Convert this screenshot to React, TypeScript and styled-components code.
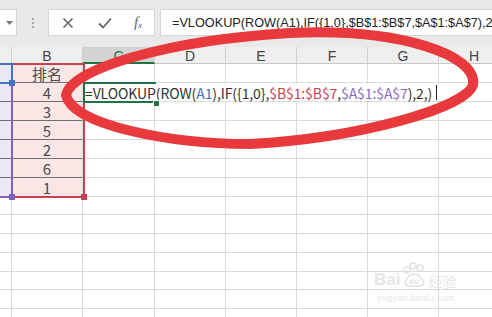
import React from "react";
import styled, { createGlobalStyle } from "styled-components";

const GlobalStyle = createGlobalStyle`
  html, body { margin: 0; padding: 0; background: #fff; overflow: hidden; }
  #root { width: 492px; height: 317px; }
`;

const COLS = [12, 71, 72, 71, 71, 71, 71, 71];
const LETTERS = ["", "B", "C", "D", "E", "F", "G", "H"];
const ROW_H = [19, 19, 19, 19, 19, 19, 19, 18, 19, 19, 19, 18, 19, 19];
const B_VALUES = ["排名", "4", "3", "5", "2", "6", "1"];

const Page = styled.div`
  position: relative;
  width: 492px;
  height: 317px;
  overflow: hidden;
  background: #fff;
  font-family: "Noto Sans CJK SC", "Liberation Sans", sans-serif;
`;

const Toolbar = styled.div`
  display: flex;
  align-items: flex-start;
  height: 47px;
  box-sizing: border-box;
  padding-top: 9px;
  background: #e9e9e9;
`;

const NameBox = styled.div`
  width: 17px;
  height: 27px;
  box-sizing: border-box;
  background: #fff;
  border: 1px solid #d6d6d6;
  border-left: none;
  display: flex;
  align-items: center;
  justify-content: flex-end;
  padding-right: 3px;
`;

const Dots = styled.div`
  width: 31px;
  height: 27px;
  display: flex;
  flex-direction: column;
  align-items: center;
  justify-content: center;
  gap: 2px;
  span {
    width: 2px;
    height: 2px;
    background: #a8a8a8;
  }
`;

const ButtonGroup = styled.div`
  width: 107px;
  height: 27px;
  box-sizing: border-box;
  background: #fff;
  border: 1px solid #d6d6d6;
  display: flex;
  align-items: center;
`;

const ToolButton = styled.div<{ $w: number }>`
  width: ${(p) => p.$w}px;
  height: 25px;
  display: flex;
  align-items: center;
  justify-content: center;
  color: #666;
`;

const Fx = styled.span`
  font-family: "Liberation Serif", serif;
  font-style: italic;
  font-size: 15px;
  color: #666;
  sub {
    font-size: 9px;
    vertical-align: -1px;
  }
`;

const FormulaInput = styled.div`
  flex: 1;
  margin-left: 5px;
  height: 27px;
  box-sizing: border-box;
  background: #fff;
  border: 1px solid #d6d6d6;
  border-right: none;
  padding-left: 11px;
  display: flex;
  align-items: center;
  white-space: nowrap;
  overflow: hidden;
  font-family: "Liberation Sans", sans-serif;
  font-size: 12.7px;
  color: #222;
`;

const Grid = styled.div`
  display: flex;
  flex-direction: column;
`;

const Row = styled.div<{ $h: number }>`
  display: flex;
  height: ${(p) => p.$h}px;
`;

const HeaderCell = styled.div<{ $w: number; $sel?: boolean }>`
  flex: 0 0 ${(p) => p.$w}px;
  box-sizing: border-box;
  height: 100%;
  background: ${(p) => (p.$sel ? "#d3d3d3" : "#efefef")};
  border-right: 1px solid #cfcfcf;
  border-bottom: ${(p) => (p.$sel ? "2px solid #217346" : "1px solid #c8c8c8")};
  display: flex;
  align-items: center;
  justify-content: center;
  font-family: "Liberation Sans", sans-serif;
  font-size: 14px;
  color: ${(p) => (p.$sel ? "#217346" : "#444")};
  padding-top: 2px;
`;

const Cell = styled.div<{ $w: number; $bg?: string; $bottom?: string }>`
  flex: 0 0 ${(p) => p.$w}px;
  box-sizing: border-box;
  height: 100%;
  background: ${(p) => p.$bg || "#fff"};
  border-right: 1px solid #dadada;
  border-bottom: 1px solid ${(p) => p.$bottom || "#dadada"};
  display: flex;
  align-items: center;
  justify-content: center;
  font-size: 15px;
  color: #4a4a4a;
  line-height: 1;
`;

const RangeBox = styled.div<{ $c: string; $x: number; $y: number; $w: number; $h: number }>`
  position: absolute;
  left: ${(p) => p.$x}px;
  top: ${(p) => p.$y}px;
  width: ${(p) => p.$w}px;
  height: ${(p) => p.$h}px;
  box-sizing: border-box;
  border: 2px solid ${(p) => p.$c};
  pointer-events: none;
`;

const Handle = styled.div<{ $c: string; $x: number; $y: number }>`
  position: absolute;
  left: ${(p) => p.$x - 3}px;
  top: ${(p) => p.$y - 3}px;
  width: 6px;
  height: 6px;
  background: ${(p) => p.$c};
`;

const ActiveCell = styled.div`
  position: absolute;
  left: 83px;
  top: 82px;
  width: 73px;
  height: 21px;
  box-sizing: border-box;
  border: 2px solid #217346;
  border-right: none;
`;

const FillHandle = styled.div`
  position: absolute;
  left: 153px;
  top: 100px;
  width: 5px;
  height: 5px;
  background: #217346;
  border: 1px solid #fff;
`;

const EditText = styled.div`
  position: absolute;
  left: 85px;
  top: 84px;
  height: 17px;
  display: flex;
  align-items: center;
  white-space: nowrap;
  background: #fff;
  padding-right: 2px;
  font-family: "Noto Sans CJK SC", "Liberation Sans", sans-serif;
  font-size: 14px;
  letter-spacing: -0.1px;
  color: #333;
`;

const Ref = styled.span<{ $c: string }>`
  color: ${(p) => p.$c};
`;

const Caret = styled.span`
  display: inline-block;
  width: 1px;
  height: 15px;
  margin-left: 4px;
  background: #222;
`;

const Overlay = styled.svg`
  position: absolute;
  left: 0;
  top: 0;
  pointer-events: none;
`;

const Watermark = styled.div`
  position: absolute;
  left: 374px;
  top: 262px;
  display: flex;
  flex-direction: column;
  align-items: flex-start;
  color: #e6e6e6;
  font-family: "Liberation Sans", sans-serif;
`;

const WmTop = styled.div`
  display: flex;
  align-items: flex-end;
  gap: 1px;
  font-size: 17px;
  font-weight: bold;
  line-height: 1;
`;

const WmCn = styled.span`
  font-size: 14px;
  font-weight: normal;
  font-family: "Noto Sans CJK SC", sans-serif;
`;

const WmSub = styled.div`
  font-size: 9px;
  margin-top: 5px;
  margin-left: 3px;
  letter-spacing: 0.3px;
`;

function CrossIcon() {
  return (
    <svg width="12" height="12" viewBox="0 0 12 12">
      <path d="M1.5 1.5 L10.5 10.5 M10.5 1.5 L1.5 10.5" stroke="#666" strokeWidth="1.6" fill="none" />
    </svg>
  );
}

function CheckIcon() {
  return (
    <svg width="14" height="12" viewBox="0 0 14 12">
      <path d="M1 6.5 L5 10.5 L13 1.5" stroke="#666" strokeWidth="1.8" fill="none" />
    </svg>
  );
}

export default function App() {
  return (
    <Page>
      <GlobalStyle />
      <Toolbar>
        <NameBox>
          <svg width="7" height="4" viewBox="0 0 7 4">
            <path d="M0 0 L7 0 L3.5 4 Z" fill="#777" />
          </svg>
        </NameBox>
        <Dots>
          <span />
          <span />
          <span />
        </Dots>
        <ButtonGroup>
          <ToolButton $w={38}>
            <CrossIcon />
          </ToolButton>
          <ToolButton $w={36}>
            <CheckIcon />
          </ToolButton>
          <ToolButton $w={30}>
            <Fx>
              f<sub>x</sub>
            </Fx>
          </ToolButton>
        </ButtonGroup>
        <FormulaInput>=VLOOKUP(ROW(A1),IF({"{"}1,0{"}"},$B$1:$B$7,$A$1:$A$7),2</FormulaInput>
      </Toolbar>

      <Grid>
        <Row $h={17}>
          {COLS.map((w, i) => (
            <HeaderCell key={i} $w={w} $sel={i === 2}>
              {LETTERS[i]}
            </HeaderCell>
          ))}
        </Row>
        {ROW_H.map((h, r) => (
          <Row key={r} $h={h}>
            {COLS.map((w, c) => {
              const inRange = r < 7;
              if (c === 0)
                return <Cell key={c} $w={w} $bg={inRange ? "#ebe8f4" : undefined} $bottom={inRange ? "#6f6f6f" : undefined} />;
              if (c === 1)
                return (
                  <Cell key={c} $w={w} $bg={inRange ? "#fbe6e6" : undefined} $bottom={inRange ? "#6f6f6f" : undefined}>
                    {inRange ? B_VALUES[r] : ""}
                  </Cell>
                );
              return <Cell key={c} $w={w} />;
            })}
          </Row>
        ))}
      </Grid>

      <RangeBox $c="#c9404e" $x={11} $y={63} $w={74} $h={135} />
      <RangeBox $c="#7e62c0" $x={-20} $y={63} $w={33} $h={135} />
      <RangeBox $c="#4472c4" $x={-20} $y={63} $w={33} $h={21} />
      <Handle $c="#4472c4" $x={12} $y={83} />
      <Handle $c="#7e62c0" $x={12} $y={197} />
      <Handle $c="#c9404e" $x={84} $y={197} />

      <ActiveCell />
      <EditText>
        =VLOOKUP(ROW(<Ref $c="#4472c4">A1</Ref>),IF({"{"}1,0{"}"},<Ref $c="#d0414c">$B$1:$B$7</Ref>,
        <Ref $c="#8a6cc6">$A$1:$A$7</Ref>),2,)
        <Caret />
      </EditText>
      <FillHandle />

      <Watermark>
        <WmTop>
          <span>Bai</span>
          <svg width="26" height="26" viewBox="0 0 26 26">
            <g fill="none" stroke="#e2e2e2" strokeWidth="1.5">
              <circle cx="6" cy="8" r="3" />
              <circle cx="12" cy="4" r="3" />
              <circle cx="19" cy="6" r="3" />
              <path d="M4 20 Q8 11 13 12 Q19 12 23 21 Q22 25 13 24 Q4 25 4 20 Z" />
            </g>
            <text x="8" y="22" fontSize="8" fill="#e2e2e2" fontFamily="Liberation Sans">du</text>
          </svg>
          <WmCn>经验</WmCn>
        </WmTop>
        <WmSub>jingyan.baidu.com</WmSub>
      </Watermark>

      <Overlay width="492" height="317" viewBox="0 0 492 317">
        <path
          d="M66 95 C72 68, 170 40, 290 33 C400 28, 478 55, 473 85 C465 108, 360 138, 250 144 C170 144, 72 125, 66 95 Z"
          fill="none"
          stroke="#e83a3c"
          strokeWidth="10"
          strokeLinejoin="round"
        />
      </Overlay>
    </Page>
  );
}
